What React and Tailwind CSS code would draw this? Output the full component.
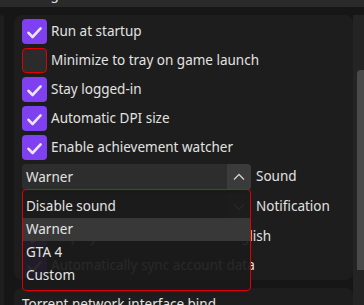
import React from 'react';

const font = { fontFamily: '"Noto Sans", "Open Sans", sans-serif' };

const Check = () => (
    <svg width="25" height="25" viewBox="0 0 25 25">
        <path d="M6.5 13.8 L10.6 18 L18.6 9.4" fill="none" stroke="#ebe4f7" strokeWidth="2.6" strokeLinecap="round" strokeLinejoin="round" />
    </svg>
);

const CheckRow = ({ label, checked = true, invalid = false }) => (
    <div className="flex items-center h-[25px]">
        {checked ? (
            <div className="w-[25px] h-[25px] rounded-[4px] bg-[#7f40f1] shrink-0">
                <Check />
            </div>
        ) : (
            <div className={`w-[25px] h-[25px] rounded-[4px] bg-[#2b2b2b] shrink-0 border ${invalid ? 'border-[#e00000]' : 'border-[#3a3a3a]'}`} />
        )}
        <span className="ml-[4px] text-[13.5px] text-[#e2e2e2] whitespace-nowrap leading-none pt-[1px]">{label}</span>
    </div>
);

const Chevron = ({ up }) => (
    <svg width="12" height="8" viewBox="0 0 12 8">
        <path d={up ? 'M1 6.5 L6 1.5 L11 6.5' : 'M1 1.5 L6 6.5 L11 1.5'} fill="none" stroke="#d0d0d0" strokeWidth="1.3" />
    </svg>
);

const Combo = ({ value, label, up }) => (
    <div className="flex items-center h-[26px]">
        <div className="w-[229px] h-[26px] flex bg-[#2d2d2d] rounded-[4px] overflow-hidden">
            <span className="flex-1 pl-[4px] text-[13.5px] text-[#e2e2e2] leading-[26px]">{value}</span>
            <div className="w-[24px] h-full bg-[#3b3b3b] flex items-center justify-center">
                <Chevron up={up} />
            </div>
        </div>
        <span className="ml-[5px] text-[13.5px] text-[#e2e2e2] leading-none">{label}</span>
    </div>
);

const options = ['Disable sound', 'Warner', 'GTA 4', 'Custom'];

export default function App() {
    return (
        <div className="w-[364px] h-[305px] overflow-hidden bg-[#161616] flex flex-col" style={font}>
            <div className="h-[7px] bg-[#2a2a2a] overflow-hidden shrink-0">
                <div className="mt-[-15px] pl-[14px] text-[13.5px] text-[#e2e2e2] leading-[18px]">Settings Profile</div>
            </div>
            <div className="flex flex-1 pt-[8px] min-h-0">
                <div className="w-[4px] bg-[#1e1e1e] rounded-tr-[6px] shrink-0" />
                <div className="ml-[10px] flex-1 flex flex-col gap-[8px] min-w-0">
                    <section className="bg-[#1d1d1d] rounded-[8px] pl-[8px] pt-[4px] pb-[2px] flex flex-col gap-[4px] shrink-0">
                        <CheckRow label="Run at startup" />
                        <CheckRow label="Minimize to tray on game launch" checked={false} invalid />
                        <CheckRow label="Stay logged-in" />
                        <CheckRow label="Automatic DPI size" />
                        <CheckRow label="Enable achievement watcher" />
                        <div className="relative flex flex-col gap-[4px]">
                            <Combo value="Warner" label="Sound" up />
                            <Combo value="" label="Notification" />
                            <CheckRow label="Display all achievements in English" />
                            <CheckRow label="Automatically sync account data" />
                            <div className="absolute left-0 top-[25px] w-[229px] h-[102px] rounded-[4px] border-[1.5px] border-[#e00000] bg-[#1a1a1a]/[0.93] pt-[5px]">
                                {options.map((o) => (
                                    <div key={o} className={`h-[23px] pl-[3px] text-[13.5px] leading-[23px] text-[#e4e4e4] ${o === 'Warner' ? 'bg-[#383838]' : ''}`}>{o}</div>
                                ))}
                            </div>
                        </div>
                    </section>
                    <section className="bg-[#1d1d1d] rounded-t-[8px] pl-[8px] pt-[3px] flex-1">
                        <span className="text-[13.5px] text-[#e2e2e2] leading-none whitespace-nowrap">Torrent network interface bind</span>
                    </section>
                </div>
                <div className="w-[11px] bg-[#242424] shrink-0 pt-[55px] pl-[4px]">
                    <div className="h-[200px] bg-[#4a4a4a] rounded-tl-[4px]" />
                </div>
            </div>
        </div>
    );
}
